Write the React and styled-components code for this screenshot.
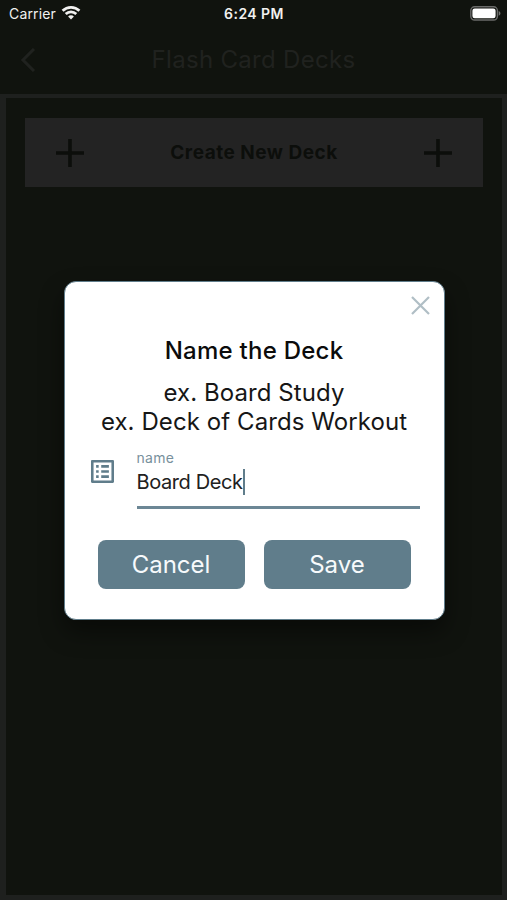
import React, { useState } from 'react';
import styled, { createGlobalStyle } from 'styled-components';

const GlobalStyle = createGlobalStyle`
    body {
        margin: 0;
        background-color: #10130e;
        font-family: Inter, Roboto, sans-serif;
    }
    * {
        box-sizing: border-box;
    }
`;

const Screen = styled.div`
    position: relative;
    display: flex;
    flex-direction: column;
    height: 900px;
    overflow: hidden;
    background-color: #10130e;
`;

const StatusBar = styled.div`
    display: grid;
    grid-template-columns: 1fr auto 1fr;
    align-items: center;
    height: 28px;
    padding: 0 6px 2px 9px;
    color: #f1f1f0;
    font-size: 14px;
`;

const Carrier = styled.div`
    display: flex;
    align-items: center;
    gap: 5px;
    letter-spacing: 0.15px;
`;

const Time = styled.div`
    margin-left: -2px;
    font-weight: 600;
    font-size: 14px;
    letter-spacing: 0.45px;
`;

const BatteryIcon = styled.svg`
    justify-self: end;
`;

const Header = styled.div`
    display: grid;
    grid-template-columns: 60px 1fr 60px;
    align-items: center;
    height: 66px;
    padding-bottom: 2px;
    color: #20221f;
`;

const BackIcon = styled.svg`
    margin-left: 20px;
`;

const HeaderTitle = styled.div`
    font-size: 24px;
    line-height: 28px;
    letter-spacing: 0.3px;
    text-align: center;
`;

const Body = styled.div`
    flex: 1;
    padding: 20px 19px;
    border: solid #1e201e;
    border-width: 4px 5px 5px 6px;
`;

const CreateDeck = styled.div`
    display: flex;
    justify-content: space-between;
    align-items: center;
    height: 69px;
    padding: 0 31px;
    background-color: #232323;
    color: #0c0e0b;
`;

const CreateLabel = styled.div`
    font-size: 19px;
    font-weight: 700;
    letter-spacing: 0.5px;
`;

const Overlay = styled.div`
    position: absolute;
    inset: 0;
    display: flex;
    justify-content: center;
    align-items: center;
    padding-left: 1px;
`;

const Modal = styled.div`
    position: relative;
    width: 381px;
    height: 339px;
    padding: 52px 24px 0 26px;
    border: 1px solid #607d8b;
    border-radius: 12px;
    background-color: #ffffff;
    box-shadow: 0 12px 24px rgba(0, 0, 0, 0.45);
`;

const CloseButton = styled.button`
    position: absolute;
    top: 14px;
    right: 14px;
    display: flex;
    padding: 0;
    border: 0;
    background: none;
    color: #b0bec5;
`;

const ModalTitle = styled.div`
    margin-left: -2px;
    color: #0b0b0b;
    font-size: 24px;
    font-weight: 500;
    line-height: 34px;
    text-align: center;
    letter-spacing: 0.25px;
`;

const Examples = styled.div`
    margin-left: -2px;
    padding-top: 10px;
`;

const Example = styled.div`
    color: #161616;
    font-size: 24px;
    line-height: 29px;
    text-align: center;
    white-space: nowrap;
    letter-spacing: 0.08px;
`;

const FieldRow = styled.div`
    display: flex;
    margin-top: 14px;
`;

const FieldIcon = styled.svg`
    flex: none;
    margin-top: 10px;
`;

const Field = styled.div`
    flex: 1;
    height: 59px;
    margin-left: 23px;
    border-bottom: 3px solid #6c8795;
`;

const FieldLabel = styled.div`
    color: #78909c;
    font-size: 14px;
    line-height: 15px;
    letter-spacing: 0.3px;
`;

const FieldValue = styled.div`
    display: flex;
    align-items: center;
    margin-top: 4px;
    color: #212121;
    font-size: 20px;
    line-height: 26px;
    letter-spacing: -0.4px;
`;

const Caret = styled.span`
    width: 2px;
    height: 26px;
    background-color: #607d8b;
`;

const Buttons = styled.div`
    display: flex;
    gap: 19px;
    margin-top: 31px;
    padding-left: 7px;
`;

const Button = styled.button`
    width: 147px;
    height: 49px;
    padding: 0;
    border: 0;
    border-radius: 8px;
    background-color: #607d8b;
    color: #f7fafc;
    font-family: inherit;
    font-size: 24px;
`;

const Plus = () => (
    <svg width="28" height="28" viewBox="0 0 28 28" stroke="currentColor" strokeWidth="3.6">
        <path d="M14 0V28M0 14H28" />
    </svg>
);

const App = () => {
    const [name] = useState('Board Deck');

    return (
        <Screen>
            <GlobalStyle />
            <StatusBar>
                <Carrier>
                    Carrier
                    <svg width="20" height="16" viewBox="0 0 20 16" fill="none" stroke="currentColor" strokeWidth="2.7">
                        <path d="M1.6 5.8C6.3 1.1 13.7 1.1 18.4 5.8" />
                        <path d="M4.7 9C7.7 6.1 12.3 6.1 15.3 9" />
                        <path d="M7.1 11.5C8.7 9.9 11.3 9.9 12.9 11.5L10 14.4Z" fill="currentColor" stroke="none" />
                    </svg>
                </Carrier>
                <Time>6:24 PM</Time>
                <BatteryIcon width="31" height="15" viewBox="0 0 31 15">
                    <rect x="0.8" y="0.8" width="26.6" height="13.2" rx="3.8" fill="none" stroke="#6a6b69" strokeWidth="1.4" />
                    <rect x="2.4" y="2.5" width="23.2" height="9.8" rx="2.3" fill="#ffffff" />
                    <path d="M28.7 5C31 6 31 8.8 28.7 9.8Z" fill="#737472" />
                </BatteryIcon>
            </StatusBar>
            <Header>
                <BackIcon width="16" height="24" viewBox="0 0 16 24" fill="none" stroke="currentColor" strokeWidth="3">
                    <path d="M14 1L3 12L14 23" />
                </BackIcon>
                <HeaderTitle>Flash Card Decks</HeaderTitle>
            </Header>
            <Body>
                <CreateDeck>
                    <Plus />
                    <CreateLabel>Create New Deck</CreateLabel>
                    <Plus />
                </CreateDeck>
            </Body>
            <Overlay>
                <Modal>
                    <CloseButton aria-label="Close">
                        <svg width="19" height="19" viewBox="0 0 19 19" stroke="currentColor" strokeWidth="2.2">
                            <path d="M1 1L18 18M18 1L1 18" />
                        </svg>
                    </CloseButton>
                    <ModalTitle>Name the Deck</ModalTitle>
                    <Examples>
                        <Example>ex. Board Study</Example>
                        <Example>ex. Deck of Cards Workout</Example>
                    </Examples>
                    <FieldRow>
                        <FieldIcon width="23" height="23" viewBox="3 3 18 18" fill="#607d8b">
                            <path d="M19 5v14H5V5h14m1.1-2H3.9c-.5 0-.9.4-.9.9v16.2c0 .4.4.9.9.9h16.2c.4 0 .9-.5.9-.9V3.9c0-.5-.5-.9-.9-.9zM11 7h6v2h-6V7zm0 4h6v2h-6v-2zm0 4h6v2h-6zM7 7h2v2H7zm0 4h2v2H7zm0 4h2v2H7z" />
                        </FieldIcon>
                        <Field>
                            <FieldLabel>name</FieldLabel>
                            <FieldValue>
                                {name}
                                <Caret />
                            </FieldValue>
                        </Field>
                    </FieldRow>
                    <Buttons>
                        <Button>Cancel</Button>
                        <Button>Save</Button>
                    </Buttons>
                </Modal>
            </Overlay>
        </Screen>
    );
};

export default App;
